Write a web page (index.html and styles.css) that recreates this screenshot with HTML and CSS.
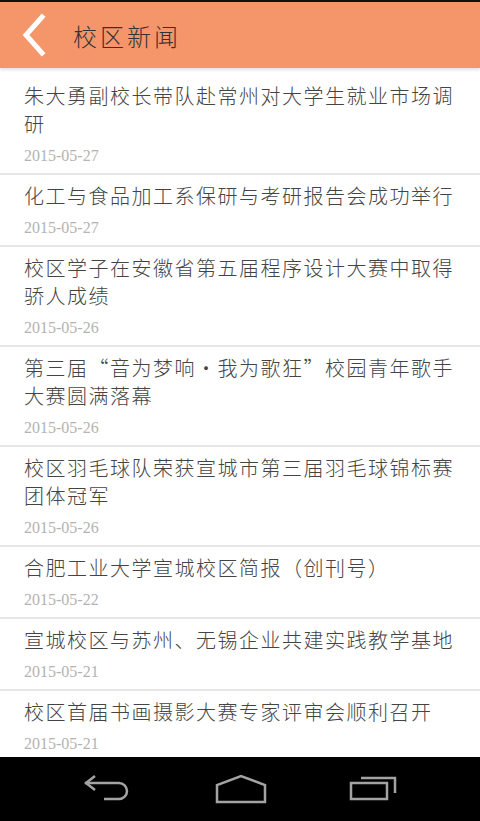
FILE: index.html
```html
<!DOCTYPE html>
<html>
<head>
    <meta charset="utf-8">
    <title>校区新闻</title>
    <link rel="stylesheet" href="styles.css">
</head>
<body>
    <div class="tela">
        <div class="status"></div>

        <div class="topo">
            <svg class="voltar" width="30" height="44" viewBox="0 0 30 44">
                <polyline points="20,4 4,22 20,40" fill="none" stroke="#ffffff" stroke-width="5" stroke-linecap="square"/>
            </svg>
            <h1 class="titulo">校区新闻</h1>
        </div>

        <ul class="lista">
            <li class="item">
                <p class="manchete">朱大勇副校长带队赴常州对大学生就业市场调研</p>
                <p class="data">2015-05-27</p>
            </li>
            <li class="item">
                <p class="manchete">化工与食品加工系保研与考研报告会成功举行</p>
                <p class="data">2015-05-27</p>
            </li>
            <li class="item">
                <p class="manchete">校区学子在安徽省第五届程序设计大赛中取得骄人成绩</p>
                <p class="data">2015-05-26</p>
            </li>
            <li class="item">
                <p class="manchete">第三届“音为梦响·我为歌狂”校园青年歌手大赛圆满落幕</p>
                <p class="data">2015-05-26</p>
            </li>
            <li class="item">
                <p class="manchete">校区羽毛球队荣获宣城市第三届羽毛球锦标赛团体冠军</p>
                <p class="data">2015-05-26</p>
            </li>
            <li class="item">
                <p class="manchete">合肥工业大学宣城校区简报（创刊号）</p>
                <p class="data">2015-05-22</p>
            </li>
            <li class="item">
                <p class="manchete">宣城校区与苏州、无锡企业共建实践教学基地</p>
                <p class="data">2015-05-21</p>
            </li>
            <li class="item">
                <p class="manchete">校区首届书画摄影大赛专家评审会顺利召开</p>
                <p class="data">2015-05-21</p>
            </li>
        </ul>

        <div class="navegacao">
            <svg width="50" height="30" viewBox="0 0 50 30">
                <path d="M2 9 H36 A8 8 0 0 1 36 25 H21" fill="none" stroke="#a3a3a3" stroke-width="2.5"/>
                <polyline points="12,2 3,9 12,16" fill="none" stroke="#a3a3a3" stroke-width="2.5"/>
            </svg>
            <svg width="52" height="30" viewBox="0 0 52 30">
                <polygon points="2,28 2,11 26,2 50,11 50,28" fill="none" stroke="#a3a3a3" stroke-width="2.5"/>
            </svg>
            <svg width="50" height="30" viewBox="0 0 50 30">
                <rect x="2" y="9" width="36" height="16" fill="none" stroke="#a3a3a3" stroke-width="2.5"/>
                <polyline points="12,4 46,4 46,19" fill="none" stroke="#a3a3a3" stroke-width="2.5"/>
            </svg>
        </div>
    </div>
</body>
</html>
```

FILE: styles.css
```css
body {
    margin: 0;
    background-color: #ffffff;
    font-family: "Noto Sans CJK SC", sans-serif;
}

.tela {
    width: 480px;
    height: 821px;
    display: flex;
    flex-direction: column;
    overflow: hidden;
}

.status {
    height: 2px;
    background-color: #111111;
}

.topo {
    height: 66px;
    background-color: #f4966a;
    display: flex;
    align-items: center;
    padding-left: 22px;
    box-shadow: 0 2px 3px rgba(0, 0, 0, 0.12);
    position: relative;
    z-index: 1;
}

.voltar {
    display: block;
}

.titulo {
    margin: 0 0 0 21px;
    font-size: 24px;
    font-weight: 300;
    letter-spacing: 3px;
    color: #333333;
}

.lista {
    flex: 1;
    list-style-type: none;
    margin: 0;
    padding: 7px 0 0 0;
    overflow: hidden;
}

.item {
    padding: 7px 16px 6px 24px;
    border-bottom: 2px solid #e6e6e6;
}

.manchete {
    margin: 0;
    font-size: 20px;
    font-weight: 300;
    line-height: 28px;
    letter-spacing: 1.5px;
    color: #444444;
}

.data {
    margin: 6px 0 0 0;
    font-family: "Liberation Serif", serif;
    font-size: 16px;
    line-height: 23px;
    color: #b3b3b3;
}

.navegacao {
    height: 64px;
    background-color: #000000;
    display: flex;
    align-items: center;
    gap: 82px;
    padding-left: 83px;
}
```
